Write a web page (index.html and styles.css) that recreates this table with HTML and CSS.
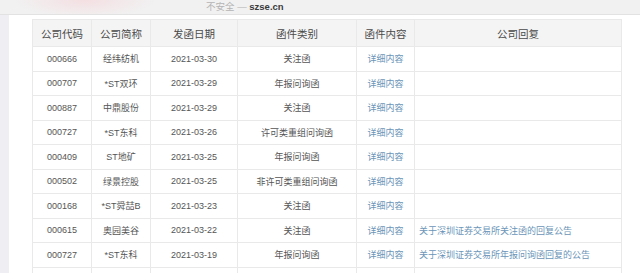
FILE: index.html
```html
<!DOCTYPE html>
<html lang="zh-CN">
<head>
<meta charset="utf-8">
<title>szse.cn</title>
<link rel="stylesheet" href="styles.css">
</head>
<body>
<div class="topbar">
  <span class="insecure">不安全 —</span>
  <span class="host">szse.cn</span>
</div>
<div class="main">
  <div class="sidebar"></div>
  <div class="content">
    <table class="grid">
      <colgroup>
        <col class="c-code"><col class="c-name"><col class="c-date"><col class="c-type"><col class="c-link"><col class="c-reply">
      </colgroup>
      <thead>
        <tr><th>公司代码</th><th>公司简称</th><th>发函日期</th><th>函件类别</th><th>函件内容</th><th>公司回复</th></tr>
      </thead>
      <tbody>
        <tr><td>000666</td><td>经纬纺机</td><td>2021-03-30</td><td>关注函</td><td class="link">详细内容</td><td class="reply"></td></tr>
        <tr><td>000707</td><td>*ST双环</td><td>2021-03-29</td><td>年报问询函</td><td class="link">详细内容</td><td class="reply"></td></tr>
        <tr><td>000887</td><td>中鼎股份</td><td>2021-03-29</td><td>关注函</td><td class="link">详细内容</td><td class="reply"></td></tr>
        <tr><td>000727</td><td>*ST东科</td><td>2021-03-26</td><td>许可类重组问询函</td><td class="link">详细内容</td><td class="reply"></td></tr>
        <tr><td>000409</td><td>ST地矿</td><td>2021-03-25</td><td>年报问询函</td><td class="link">详细内容</td><td class="reply"></td></tr>
        <tr><td>000502</td><td>绿景控股</td><td>2021-03-25</td><td>非许可类重组问询函</td><td class="link">详细内容</td><td class="reply"></td></tr>
        <tr><td>000168</td><td>*ST舜喆B</td><td>2021-03-23</td><td>关注函</td><td class="link">详细内容</td><td class="reply"></td></tr>
        <tr><td>000615</td><td>奥园美谷</td><td>2021-03-22</td><td>关注函</td><td class="link">详细内容</td><td class="reply">关于深圳证券交易所关注函的回复公告</td></tr>
        <tr><td>000727</td><td>*ST东科</td><td>2021-03-19</td><td>年报问询函</td><td class="link">详细内容</td><td class="reply">关于深圳证券交易所年报问询函回复的公告</td></tr>
        <tr><td></td><td></td><td></td><td></td><td></td><td></td></tr>
      </tbody>
    </table>
  </div>
</div>
</body>
</html>
```

FILE: styles.css
```css
html, body {
  margin: 0;
  padding: 0;
  background: #ffffff;
  overflow: hidden;
}

body {
  width: 640px;
  height: 273px;
  font-family: "Liberation Sans", "Noto Sans CJK SC", sans-serif;
}

.topbar {
  height: 15px;
  box-sizing: border-box;
  border-bottom: 1px solid #e2e2e2;
  background:
    radial-gradient(ellipse 70px 18px at 85px 0px, #f4dfe2, rgba(244, 223, 226, 0)),
    #f1f1f1;
  padding-left: 206px;
  font-size: 9.5px;
  line-height: 14px;
  white-space: nowrap;
}

.insecure {
  color: #b4b4b4;
}

.host {
  color: #3a3a3a;
  font-weight: bold;
}

.main {
  display: flex;
  height: 258px;
  overflow: hidden;
}

.sidebar {
  width: 9px;
  background: #eeeef3;
  flex: none;
}

.content {
  flex: 1;
  padding-left: 23px;
  padding-top: 4px;
}

.grid {
  border-collapse: collapse;
  table-layout: fixed;
  width: 589px;
}

.c-code { width: 59px; }
.c-name { width: 59px; }
.c-date { width: 87px; }
.c-type { width: 119px; }
.c-link { width: 58px; }
.c-reply { width: 207px; }

.grid th,
.grid td {
  border: 1px solid #e9e9e9;
  padding: 0;
  text-align: center;
  white-space: nowrap;
  overflow: hidden;
}

.grid th {
  height: 26px;
  background: #f4f4f4;
  color: #4a4a4a;
  font-size: 10.5px;
  font-weight: normal;
}

.grid td {
  height: 23.5px;
  color: #555555;
  font-size: 9px;
}

.grid td.link {
  color: #6b95b8;
}

.grid td.reply {
  text-align: left;
  padding-left: 4px;
  color: #6b95b8;
}
```
